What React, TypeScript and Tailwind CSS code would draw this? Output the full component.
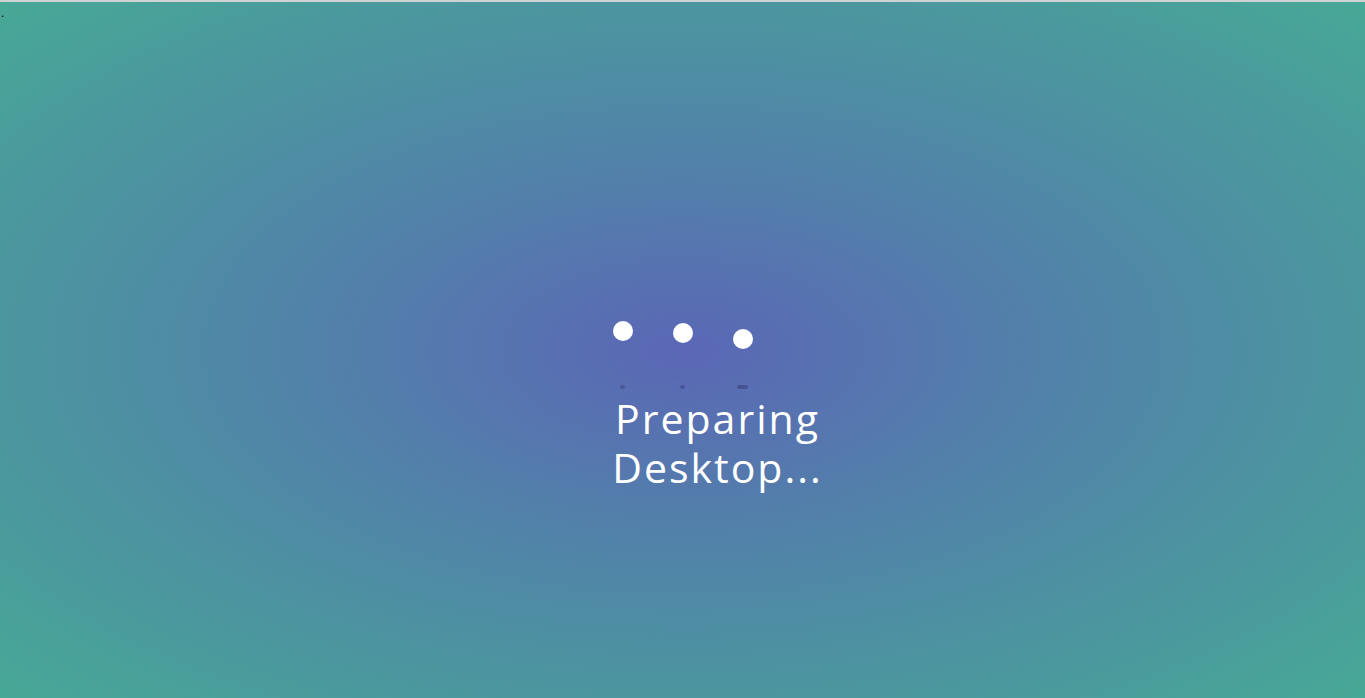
export default function App() {
  return (
    <div className="flex h-[698px] w-full flex-col overflow-hidden">
      {/* browser top edge */}
      <div className="h-[2px] w-full shrink-0 bg-[#cfd3d4]" />

      <div className="relative flex flex-1 flex-col items-center bg-[radial-gradient(ellipse_at_center,#5b67b6_0%,#5086a7_45%,#47a896_100%)] pt-[319px]">
        <span className="absolute left-[1px] top-[3px] font-['Liberation_Sans',sans-serif] text-[12px] leading-[16px] text-black">
          .
        </span>

        {/* bouncing dots */}
        <div className="flex h-[64px] items-start gap-10">
          <div className="h-5 w-5 rounded-full bg-white" />
          <div className="mt-[2px] h-5 w-5 rounded-full bg-white" />
          <div className="mt-[8px] h-5 w-5 rounded-full bg-white" />
        </div>

        {/* shadows */}
        <div className="flex h-[4px] items-center gap-10">
          <div className="flex w-5 justify-center">
            <div className="h-[4px] w-[5px] rounded-full bg-[#3f4a85]/60" />
          </div>
          <div className="flex w-5 justify-center">
            <div className="h-[4px] w-[5px] rounded-full bg-[#3f4a85]/60" />
          </div>
          <div className="flex w-5 justify-center">
            <div className="h-[4px] w-[11px] rounded-full bg-[#3f4a85]/70" />
          </div>
        </div>

        <p className="mt-[5px] w-[260px] translate-x-[35px] text-center font-['Open_Sans',sans-serif] text-[41px] font-medium leading-[49px] tracking-[2px] text-white">
          Preparing Desktop...
        </p>
      </div>
    </div>
  );
}
